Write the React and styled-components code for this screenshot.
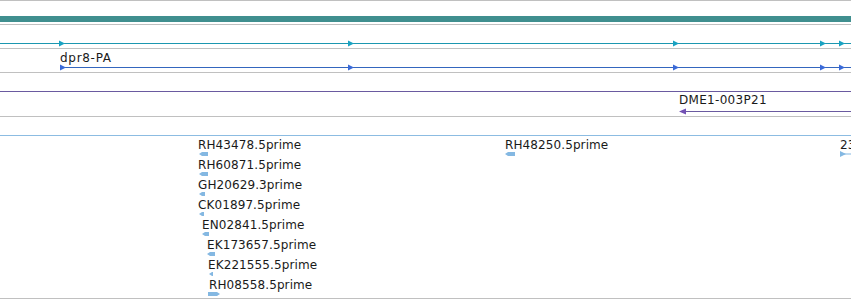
import styled, { createGlobalStyle } from "styled-components";

const GlobalStyle = createGlobalStyle`
  html, body { margin: 0; padding: 0; background: #fff; }
`;

const W = 851;

const Page = styled.div`
  width: ${W}px;
  height: 300px;
  overflow: hidden;
  background: #fff;
  border-top: 1px solid #c0c0c0;
  box-sizing: border-box;
  font-family: "DejaVu Sans", "Liberation Sans", sans-serif;
`;

const Track = styled.div`
  position: relative;
  height: ${(p) => p.$h}px;
  border-bottom: 1px solid #c0c0c0;
  overflow: hidden;
`;

const Canvas = styled.svg`
  position: absolute;
  left: 0;
  top: 0;
  display: block;
`;

const Label = styled.span`
  position: absolute;
  font-size: 12px;
  line-height: 14px;
  letter-spacing: ${(p) => p.$ls || 0}px;
  color: #1a1a1a;
  white-space: nowrap;
`;

// right pointing flag on a transcript line
const Flag = ({ x, y, color }) => (
  <polygon points={`${x},${y - 3} ${x + 6},${y} ${x},${y + 3}`} fill={color} />
);

// small EST glyph, 4px tall
const Est = ({ x, y, w, dir, color = "#84b8e2" }) => {
  const pts =
    dir === "left"
      ? `${x},${y + 2} ${x + 3},${y} ${x + w},${y} ${x + w},${y + 4} ${x + 3},${y + 4}`
      : `${x},${y} ${x + w - 3},${y} ${x + w},${y + 2} ${x + w - 3},${y + 4} ${x},${y + 4}`;
  return <polygon points={pts} fill={color} />;
};

const exons = [59, 348, 673, 820, 839];

const ests = [
  { name: "RH43478.5prime", lx: 198, gx: 199, w: 9, dir: "left" },
  { name: "RH60871.5prime", lx: 198, gx: 199, w: 9, dir: "left" },
  { name: "GH20629.3prime", lx: 198, gx: 199, w: 6, dir: "left" },
  { name: "CK01897.5prime", lx: 198, gx: 199, w: 5, dir: "left" },
  { name: "EN02841.5prime", lx: 202, gx: 202, w: 7, dir: "left" },
  { name: "EK173657.5prime", lx: 207, gx: 207, w: 8, dir: "left" },
  { name: "EK221555.5prime", lx: 208, gx: 209, w: 4, dir: "left" },
  { name: "RH08558.5prime", lx: 209, gx: 208, w: 12, dir: "right" },
];

export default function App() {
  return (
    <>
      <GlobalStyle />
      <Page>
        <Track $h={23}>
          <Canvas width={W} height={23}>
            <rect x={0} y={15} width={W} height={6} fill="#408f8f" />
          </Canvas>
        </Track>

        <Track $h={23}>
          <Canvas width={W} height={23}>
            <rect x={0} y={18} width={W} height={1} fill="#1c97b0" />
            {exons.map((x) => (
              <Flag key={x} x={x} y={18.5} color="#19a2c2" />
            ))}
          </Canvas>
        </Track>

        <Track $h={23}>
          <Canvas width={W} height={23}>
            <rect x={60} y={18} width={W - 60} height={1} fill="#3466be" />
            {exons.map((x) => (
              <Flag key={x} x={x === 59 ? 60 : x} y={18.5} color="#3a6ad8" />
            ))}
          </Canvas>
          <Label $ls={0.7} style={{ left: 60, top: 2 }}>dpr8-PA</Label>
        </Track>

        <Track $h={43}>
          <Canvas width={W} height={43}>
            <rect x={0} y={18} width={W} height={1} fill="#6a5aa0" />
            <rect x={681} y={38} width={W - 681} height={1} fill="#6a5aa0" />
            <polygon points="679,38.5 686,35.5 686,41.5" fill="#7250b4" />
          </Canvas>
          <Label $ls={0.3} style={{ left: 679, top: 20 }}>DME1-003P21</Label>
        </Track>

        <Track $h={181}>
          <Canvas width={W} height={181}>
            <rect x={0} y={18} width={W} height={1} fill="#8cbce2" />
            {ests.map((e, i) => (
              <Est key={e.name} x={e.gx} y={35 + i * 20} w={e.w} dir={e.dir} />
            ))}
            <Est x={505} y={35} w={10} dir="left" />
            <polygon points="840,34 846,37 840,40" fill="#84b8e2" />
            <rect x={840} y={36.5} width={11} height={1} fill="#84b8e2" />
          </Canvas>
          {ests.map((e, i) => (
            <Label key={e.name} $ls={0.1} style={{ left: e.lx, top: 21 + i * 20 }}>
              {e.name}
            </Label>
          ))}
          <Label $ls={0.1} style={{ left: 505, top: 21 }}>RH48250.5prime</Label>
          <Label style={{ left: 840, top: 21 }}>23</Label>
        </Track>
      </Page>
    </>
  );
}
